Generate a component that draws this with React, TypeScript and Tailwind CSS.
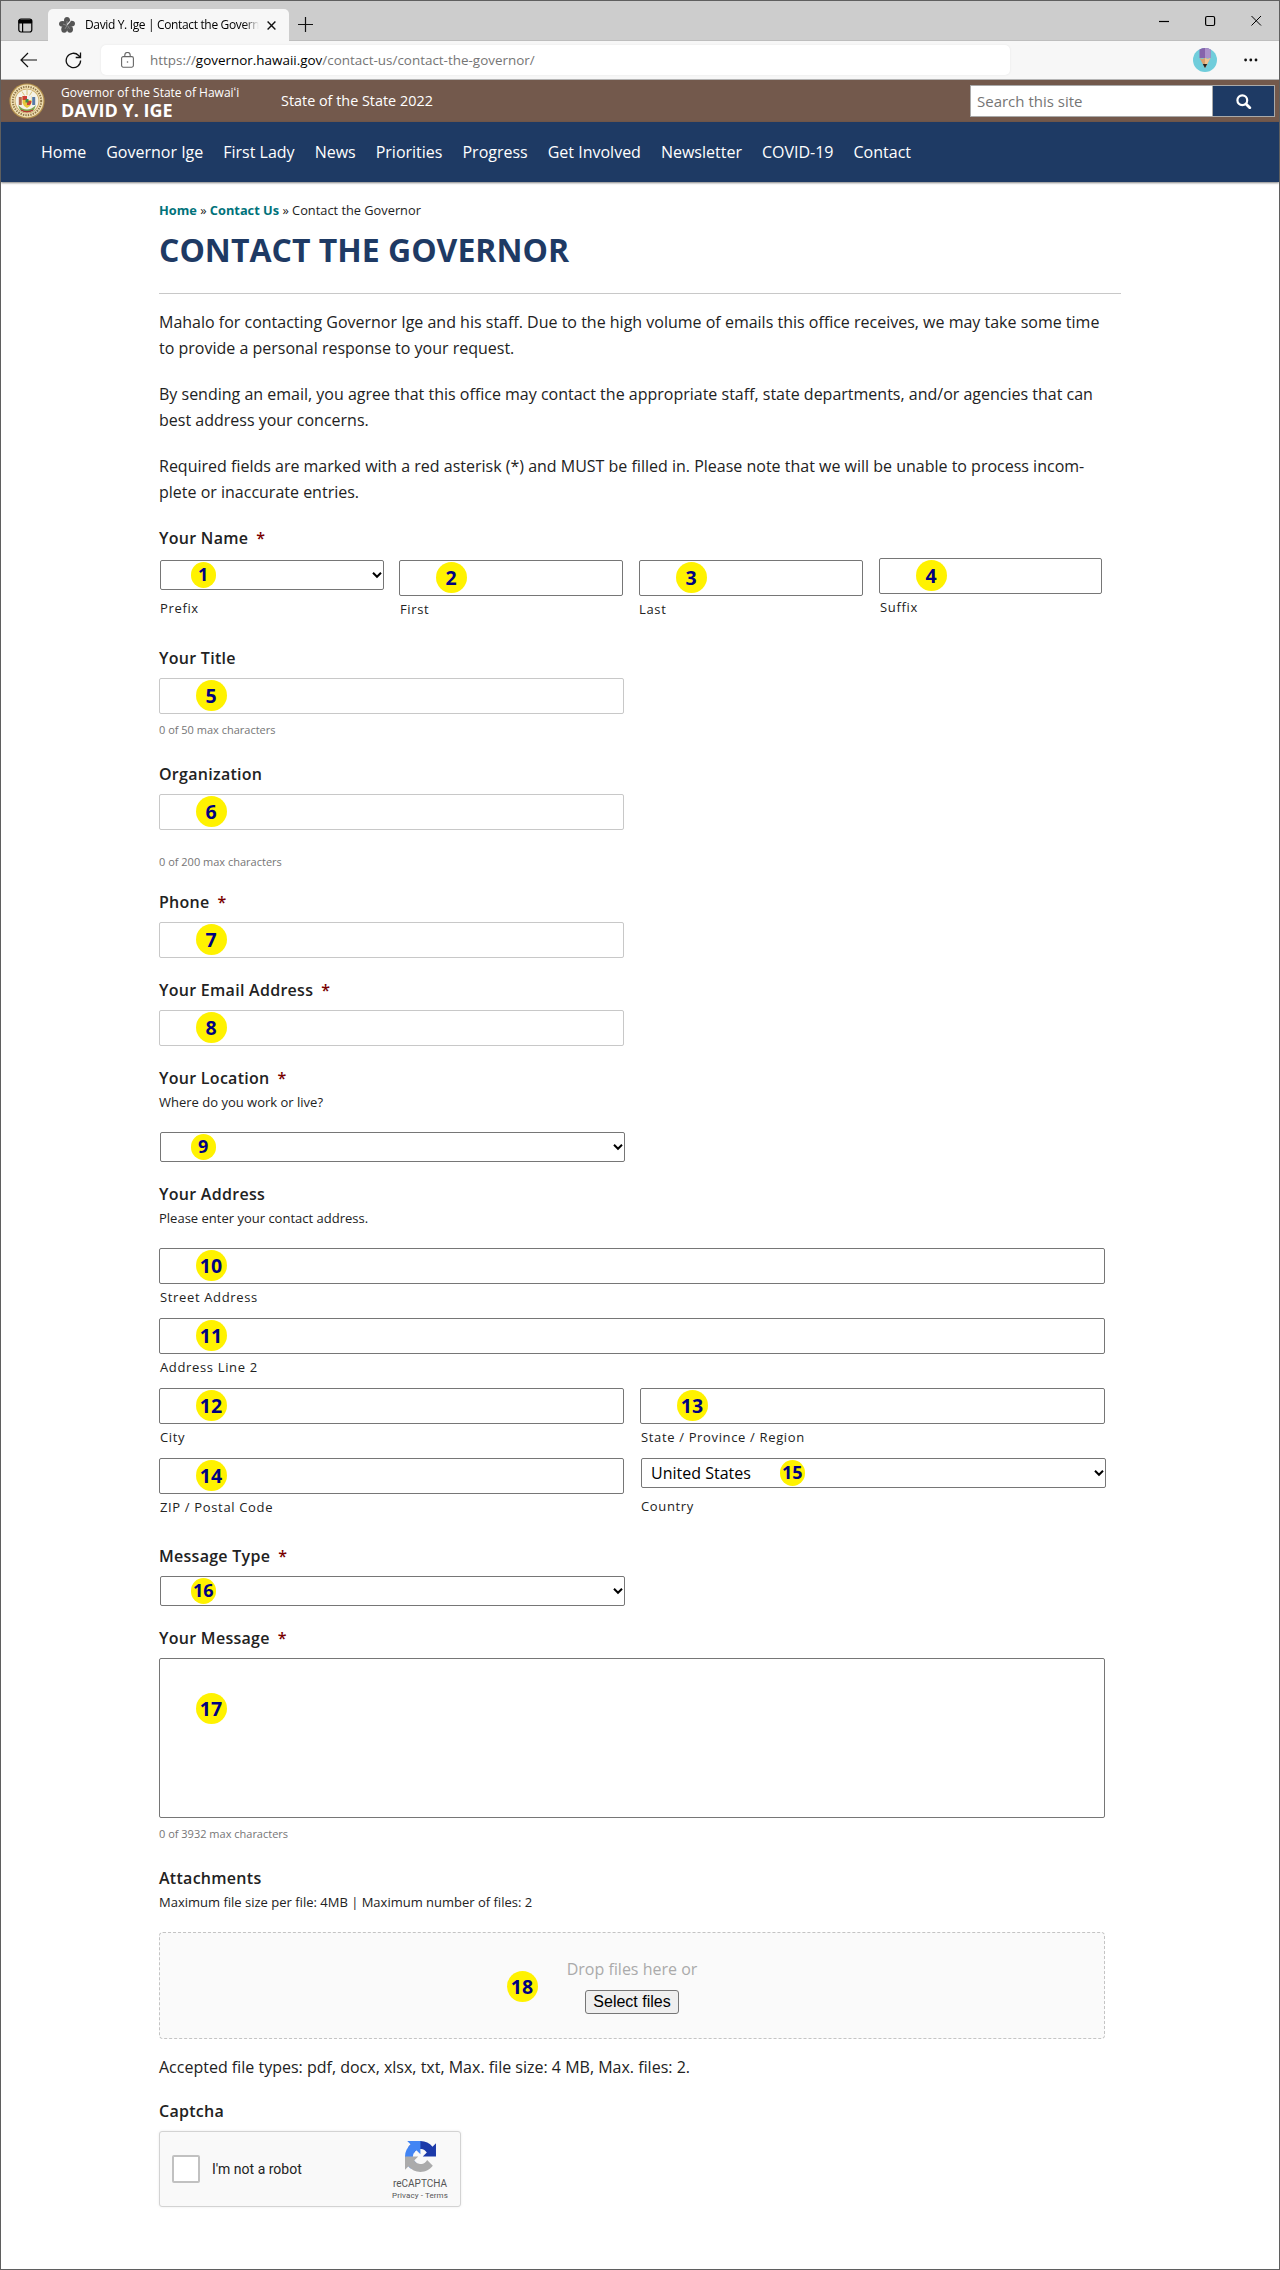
import React from "react";

const NAV = ["Home", "Governor Ige", "First Lady", "News", "Priorities", "Progress", "Get Involved", "Newsletter", "COVID-19", "Contact"];

function Badge({ n, small = false, className = "" }: { n: number; small?: boolean; className?: string }) {
  return (
    <span
      className={`absolute flex items-center justify-center rounded-full bg-[#fff200] font-bold text-[#000080] ${
        small ? "size-[25.5px] text-[18px] leading-[25px]" : "size-[31px] text-[19.5px] leading-[31px]"
      } ${className}`}
    >
      {n}
    </span>
  );
}

function Label({ children, required = false }: { children: React.ReactNode; required?: boolean }) {
  return (
    <div className="h-6 text-[16px] leading-6 font-semibold tracking-[0.28px] whitespace-pre text-[#222]">
      {children}
      {required && <span className="ml-2 text-[#790000]">*</span>}
    </div>
  );
}

function Field({ n, light = false, className = "" }: { n: number; light?: boolean; className?: string }) {
  return (
    <div className={`relative h-9 ${className}`}>
      <input
        aria-label={`Field ${n}`}
        className={`block h-9 w-full rounded-[2px] border bg-white ${light ? "border-[#c8c8c8]" : "border-[#767676]"}`}
      />
      <Badge n={n} className="top-[2px] left-[36.5px]" />
    </div>
  );
}

function Select({ n, value = "", className = "", badge = "left-[30.5px]" }: { n: number; value?: string; className?: string; badge?: string }) {
  return (
    <div className={`relative h-[30px] ${className}`}>
      <select
        aria-label={`Field ${n}`}
        className="block h-[30px] w-full appearance-none rounded-[2px] border border-[#767676] bg-white pl-[9px] text-[16px] leading-7 text-black"
      >
        <option>{value}</option>
      </select>
      <svg className="absolute top-[11px] right-[2px] h-[8px] w-[10px]" viewBox="0 0 10 8" fill="none" stroke="#000" strokeWidth="2">
        <path d="M1 1.8 5 5.8 9 1.8" />
      </svg>
      <Badge n={n} small className={`top-[2px] ${badge}`} />
    </div>
  );
}

function Sub({ children, flush = false, gap = "mt-1" }: { children: React.ReactNode; flush?: boolean; gap?: string }) {
  return (
    <div className={`h-[18px] text-[13px] leading-[18px] tracking-[0.65px] whitespace-nowrap text-[#222] ${flush ? "pl-0" : "pl-px"} ${gap}`}>
      {children}
    </div>
  );
}

function Counter({ children, className }: { children: React.ReactNode; className: string }) {
  return <div className={`h-4 text-[11px] leading-4 text-[#767676] ${className}`}>{children}</div>;
}

function Hint({ children }: { children: React.ReactNode }) {
  return <div className="mt-[3px] h-[18px] text-[13px] leading-[18px] text-[#222]">{children}</div>;
}

function TabStrip() {
  return (
    <div className="flex h-10 items-start border-b border-[#bebebe] bg-[#cdcdcd]">
      <svg className="mt-[17px] ml-[17px] h-[15px] w-[15px]" viewBox="0 0 15 15" fill="none" stroke="#000">
        <rect x="0.8" y="1" width="13" height="13" rx="2.2" strokeWidth="1.2" />
        <path d="M1 2h12.6v3H1z" fill="#000" />
        <path d="M4.6 5v9" strokeWidth="1.2" />
      </svg>
      <div className="mt-2 ml-[15px] flex h-8 w-[241px] items-center rounded-t-[5px] bg-[#f7f7f7]">
        <svg className="ml-[11px] h-4 w-4" viewBox="0 0 16 16" fill="#555">
          <ellipse cx="8" cy="3.6" rx="3" ry="3.5" />
          <ellipse cx="3.6" cy="6.8" rx="3.6" ry="2.9" />
          <ellipse cx="12.5" cy="6.6" rx="3.5" ry="2.9" />
          <ellipse cx="5.2" cy="12.2" rx="2.9" ry="3.5" />
          <ellipse cx="11" cy="12.3" rx="3" ry="3.4" />
          <circle cx="8" cy="8" r="3" />
          <path d="M8 7.5V4M8 8.5l-4-1.4M8 8.5l-2 3.4M8.5 8.5l2 3.2" stroke="#aaa" strokeWidth="0.6" />
          <path d="m8.2 7.6 3.2-3.4" stroke="#eee" strokeWidth="1.1" />
        </svg>
        <div className="ml-[10px] w-[174px] overflow-hidden bg-linear-to-r from-black from-90% to-[#f7f7f7] bg-clip-text text-[12px] leading-5 tracking-[-0.35px] whitespace-nowrap text-transparent">
          David Y. Ige | Contact the Governor
        </div>
        <svg className="ml-2 h-[9px] w-[9px]" viewBox="0 0 9 9" stroke="#111" strokeWidth="1.4">
          <path d="m.6.6 7.8 7.8M8.4.6.6 8.4" />
        </svg>
      </div>
      <svg className="mt-4 ml-[9px] h-[15px] w-[15px]" viewBox="0 0 15 15" stroke="#111" strokeWidth="1.2">
        <path d="M7.5 0v15M0 7.5h15" />
      </svg>
      <svg className="mt-[14px] ml-auto h-3 w-[104px]" viewBox="0 0 104 12" fill="none" stroke="#000">
        <path d="M0 6.5h10" strokeWidth="1.2" />
        <rect x="46.6" y="1.5" width="9" height="9" rx="1.5" strokeWidth="1.2" />
        <path d="m92.5 1 9.5 9.5M102 1l-9.5 9.5" />
      </svg>
      <div className="w-[16px]" />
    </div>
  );
}

function Toolbar() {
  return (
    <div className="flex h-[39px] items-center border-b border-[#b5b5b5] bg-[#f7f7f7]">
      <svg className="ml-[19px] h-4 w-[18px]" viewBox="0 0 18 16" fill="none" stroke="#111" strokeWidth="1.2">
        <path d="M17 8H1.2M8 1 1 8l7 7" />
      </svg>
      <svg className="ml-[27px] h-[17px] w-[17px]" viewBox="0 0 17 17" fill="none" stroke="#111" strokeWidth="1.3">
        <path d="M15.6 8.5a7.2 7.2 0 1 1-2-5L15.4 5.2M15.5.6v4.9h-4.8" />
      </svg>
      <div className="ml-[19px] flex h-[30px] w-[909px] items-center rounded-[5px] bg-white shadow-[0_0_2px_#e2e2e2]">
        <svg className="ml-5 h-[16px] w-[13px]" viewBox="0 0 13 16" fill="none" stroke="#666" strokeWidth="1.1">
          <rect x="0.6" y="4.6" width="11.8" height="10.6" rx="1.6" />
          <path d="M3.8 4.6V3.2a2.7 2.7 0 0 1 5.4 0v1.4" />
          <circle cx="6.5" cy="10" r="0.8" fill="#666" stroke="none" />
        </svg>
        <div className="ml-[16px] text-[13.45px] leading-5 whitespace-nowrap text-[#757575]">
          https://<span className="text-black">governor.hawaii.gov</span>/contact-us/contact-the-governor/
        </div>
      </div>
      <svg className="ml-[183px] h-6 w-6" viewBox="0 0 24 24">
        <circle cx="12" cy="12" r="12" fill="#70cddb" />
        <path d="M6.5 1.4Q12-1.2 17.5 1.4V10h-11z" fill="#8662ab" />
        <path d="M12 0q3 0 5.5 1.4V10H12z" fill="#ab91ca" />
        <path d="m6.5 10 2.8 1 2.7-1 2.7 1 2.8-1L12 20z" fill="#d9a270" />
        <path d="m12 10 2.7 1 2.8-1L12 20z" fill="#edc292" />
        <path d="M9.8 16h4.4L12 20z" fill="#222" />
      </svg>
      <svg className="ml-[27px] h-1 w-[14px]" viewBox="0 0 14 4" fill="#111">
        <circle cx="1.6" cy="2" r="1.4" />
        <circle cx="6.8" cy="2" r="1.4" />
        <circle cx="12" cy="2" r="1.4" />
      </svg>
    </div>
  );
}

function Seal() {
  return (
    <svg className="ml-[8px] h-9 w-9" viewBox="0 0 36 36">
      <circle cx="18" cy="18" r="17.6" fill="#b3904d" />
      <circle cx="18" cy="18" r="16.4" fill="#f0dfb4" />
      <circle cx="18" cy="18" r="14.2" fill="none" stroke="#8c7446" strokeWidth="2" strokeDasharray="1.3 1.2" />
      <circle cx="18" cy="18" r="12.3" fill="#c7a45c" />
      <circle cx="18" cy="18" r="11.5" fill="#f5f2e6" />
      <path d="M18 7v5M13 8.5l2.5 4M23 8.5l-2.5 4" stroke="#d8c37c" />
      <path d="M9 22q9 9 18 0l-2 5q-7 4-14 0z" fill="#7ea54c" />
      <path d="M9.8 14h3v8h-3z" fill="#b3664d" />
      <path d="M23.2 14h3v8h-3z" fill="#5779a6" />
      <path d="M13.5 13h9v7q-1 3.5-4.5 5-3.500-1.500-4.500-5z" fill="#e8c63c" />
      <path d="M13.500 13H18v4h-4.500zM18 18h4.500q0 3-2 4H18z" fill="#cf3e35" />
      <path d="M18 13h4.500v4H18z" fill="#eee" />
      <path d="M16.500 16h3v3.500h-3z" fill="#3f8d4d" />
      <path d="M12 27q6 3.500 12 0" stroke="#b33b32" strokeWidth="1.3" fill="none" />
    </svg>
  );
}

function SiteHeader() {
  return (
    <header>
      <div className="flex h-[42px] items-center bg-[#73594c] text-white">
        <Seal />
        <div className="ml-4 w-[220px] pt-[2px] whitespace-nowrap">
          <div className="text-[12px] leading-[18px]">Governor of the State of Hawaiʻi</div>
          <div className="-mt-[2px] text-[18px] leading-5 font-bold">DAVID Y. IGE</div>
        </div>
        <div className="text-[14.4px] leading-5 whitespace-nowrap">State of the State 2022</div>
        <div className="mr-[4px] ml-auto flex h-8 w-[305px] border border-[#a9a9a9]">
          <div className="flex-1 border-r border-[#a9a9a9] bg-white pl-[6px] text-[15px] leading-[30px] text-[#757575]">Search this site</div>
          <button className="flex w-[61px] items-center justify-center bg-[#1e3a64]" aria-label="Search">
            <svg className="h-[15px] w-4" viewBox="0 0 16 15" fill="none" stroke="#fff">
              <circle cx="6.3" cy="6.3" r="4.9" strokeWidth="2.2" />
              <path d="m10 10 3.800 3.800" strokeWidth="2.8" strokeLinecap="round" />
            </svg>
          </button>
        </div>
      </div>
      <nav className="flex h-[60px] items-center gap-5 bg-[#1e3a64] pl-10 text-[16px] text-white shadow-[0_1px_2px_rgba(0,0,0,0.5)]">
        {NAV.map((t) => (
          <a key={t} className="whitespace-nowrap">{t}</a>
        ))}
      </nav>
    </header>
  );
}

function Captcha() {
  return (
    <div className="mt-2 flex h-[76px] w-[302px] items-center rounded-[3px] border border-[#d3d3d3] bg-[#f9f9f9] font-[Roboto] shadow-[0_0_3px_rgba(0,0,0,0.08)]">
      <div className="ml-3 size-7 rounded-[2px] border-2 border-[#c1c1c1] bg-white" />
      <div className="ml-3 flex-1 text-[14px] leading-5 text-[#222]">I'm not a robot</div>
      <div className="mr-[11px] flex w-[58px] flex-col items-center text-[#555]">
        <svg className="mt-1 h-[31px] w-[31px]" viewBox="0 0 64 64">
          <path fill="#1c3aa9" d="M64 31.955l-.033-1.37V4.687l-7.16 7.16C50.948 4.674 42.033.093 32.05.093c-10.4 0-19.622 4.96-25.458 12.64l11.736 11.86a15.55 15.55 0 0 1 4.754-5.334c2.05-1.6 4.952-2.906 8.968-2.906.485 0 .86.057 1.135.163 4.976.393 9.288 3.14 11.828 7.124l-8.307 8.307L64 31.953" />
          <path fill="#4285f4" d="M31.862.094l-1.37.033H4.594l7.16 7.16C4.58 13.147 0 22.06 0 32.046c0 10.4 4.96 19.622 12.64 25.458L24.5 45.768a15.55 15.55 0 0 1-5.334-4.754c-1.6-2.05-2.906-4.952-2.906-8.968 0-.485.057-.86.163-1.135.393-4.976 3.14-9.288 7.124-11.828l8.307 8.307L31.86.095" />
          <path fill="#ababab" d="M.001 32.045l.033 1.37v25.898l7.16-7.16c5.86 7.173 14.774 11.754 24.76 11.754 10.4 0 19.622-4.96 25.458-12.64l-11.736-11.86a15.55 15.55 0 0 1-4.754 5.334c-2.05 1.6-4.952 2.906-8.968 2.906-.485 0-.86-.057-1.135-.163-4.976-.393-9.288-3.14-11.828-7.124l8.307-8.307c-10.522.04-22.4.066-27.295-.005" />
        </svg>
        <div className="mt-[5px] text-[10px] leading-[14px]">reCAPTCHA</div>
        <div className="-mt-px text-[8px] leading-[12px] tracking-[0.1px] whitespace-nowrap">Privacy - Terms</div>
      </div>
    </div>
  );
}

export default function App() {
  return (
    <div className="h-[2270px] w-[1280px] overflow-hidden border border-[#5f5f5f] bg-white font-['Open_Sans',sans-serif] text-[#222]">
      <TabStrip />
      <Toolbar />
      <SiteHeader />
      <main className="ml-[158px] w-[946px] pt-[18px]">
        <div className="text-[12.8px] leading-5 text-[#222]">
          <a className="font-bold text-[#00727a]">Home</a> » <a className="font-bold text-[#00727a]">Contact Us</a> » Contact the Governor
        </div>
        <h1 className="mt-[10px] text-[32px] leading-10 font-bold text-[#1e3a64]">CONTACT THE GOVERNOR</h1>
        <div className="mt-[23px] h-px w-[962px] bg-[#c8c8c8]" />
        <div className="mt-[15px] flex flex-col gap-5 text-[16px] leading-[26px] whitespace-nowrap">
          <p>Mahalo for contacting Governor Ige and his staff. Due to the high volume of emails this office receives, we may take some time<br />to provide a personal response to your request.</p>
          <p>By sending an email, you agree that this office may contact the appropriate staff, state departments, and/or agencies that can<br />best address your concerns.</p>
          <p>Required fields are marked with a red asterisk (*) and MUST be filled in. Please note that we will be unable to process incom-<br />plete or inaccurate entries.</p>
        </div>

        <div className="mt-[21px]"><Label required>Your Name</Label></div>
        <div className="mt-2 flex h-[66px]">
          <div className="ml-px w-[224px] pt-[2px]"><Select n={1} /><Sub flush gap="mt-[9px]">Prefix</Sub></div>
          <div className="ml-[15px] w-[224px] pt-[2px]"><Field n={2} /><Sub>First</Sub></div>
          <div className="ml-4 w-[224px] pt-[2px]"><Field n={3} /><Sub flush>Last</Sub></div>
          <div className="ml-4 w-[223px]"><Field n={4} /><Sub>Suffix</Sub></div>
        </div>

        <div className="mt-[22px]"><Label>Your Title</Label></div>
        <Field n={5} light className="mt-2 w-[465px]" />
        <Counter className="mt-2">0 of 50 max characters</Counter>

        <div className="mt-6"><Label>Organization</Label></div>
        <Field n={6} light className="mt-2 w-[465px]" />
        <Counter className="mt-6">0 of 200 max characters</Counter>

        <div className="mt-5"><Label required>Phone</Label></div>
        <Field n={7} light className="mt-2 w-[465px]" />

        <div className="mt-5"><Label required>Your Email Address</Label></div>
        <Field n={8} light className="mt-2 w-[465px]" />

        <div className="mt-5"><Label required>Your Location</Label></div>
        <Hint>Where do you work or live?</Hint>
        <Select n={9} className="mt-[21px] ml-px w-[465px]" />

        <div className="mt-5"><Label>Your Address</Label></div>
        <Hint>Please enter your contact address.</Hint>
        <Field n={10} className="mt-[21px]" />
        <Sub>Street Address</Sub>
        <Field n={11} className="mt-3" />
        <Sub>Address Line 2</Sub>
        <div className="mt-3 flex gap-4">
          <div className="w-[465px]"><Field n={12} /><Sub>City</Sub></div>
          <div className="w-[465px]"><Field n={13} /><Sub>State / Province / Region</Sub></div>
        </div>
        <div className="mt-3 flex">
          <div className="w-[465px] shrink-0"><Field n={14} /><Sub>ZIP / Postal Code</Sub></div>
          <div className="ml-[17px] w-[465px] shrink-0">
            <Select n={15} value="United States" badge="left-[138.5px]" />
            <Sub flush gap="mt-[9px]">Country</Sub>
          </div>
        </div>

        <div className="mt-7"><Label required>Message Type</Label></div>
        <Select n={16} className="mt-2 ml-px w-[465px]" />

        <div className="mt-5"><Label required>Your Message</Label></div>
        <div className="relative mt-2 h-40">
          <textarea aria-label="Your Message" className="block h-40 w-full resize-none rounded-[2px] border border-[#767676]" />
          <Badge n={17} className="top-[35px] left-[36.5px]" />
        </div>
        <Counter className="mt-2">0 of 3932 max characters</Counter>

        <div className="mt-6"><Label>Attachments</Label></div>
        <Hint>Maximum file size per file: 4MB | Maximum number of files: 2</Hint>
        <div className="relative mt-[21px] flex h-[107px] flex-col items-center rounded-[4px] border border-dashed border-[#c4c4c4] bg-[#fafafa] pt-6">
          <div className="text-[16px] leading-6 text-[#aaa]">Drop files here or</div>
          <button className="mt-[9px] h-6 w-[94px] rounded-[3px] border border-[#767676] bg-[#efefef] font-['Liberation_Sans'] text-[16px] leading-[20px] text-black">
            Select files
          </button>
          <Badge n={18} className="top-[38px] left-[346.5px]" />
        </div>
        <div className="mt-4 text-[16px] leading-6">Accepted file types: pdf, docx, xlsx, txt, Max. file size: 4 MB, Max. files: 2.</div>

        <div className="mt-5"><Label>Captcha</Label></div>
        <Captcha />
      </main>
    </div>
  );
}
